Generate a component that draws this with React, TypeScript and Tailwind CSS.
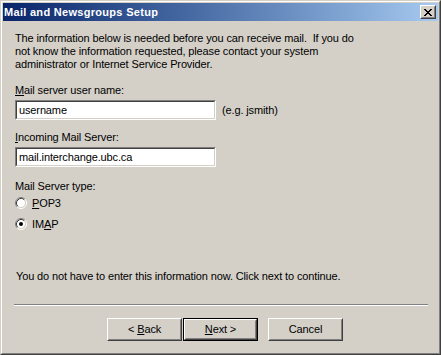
import React from 'react';

const font = { fontFamily: '"Liberation Sans", Arial, sans-serif' };

function Sunken({ value }: { value: string }) {
  return (
    <div className="w-[201px] h-[20px] border border-t-[#808080] border-l-[#808080] border-b-white border-r-white">
      <div className="h-full border border-t-[#404040] border-l-[#404040] border-b-[#d4d0c8] border-r-[#d4d0c8] bg-white pl-[2px] leading-[16px]">
        {value}
      </div>
    </div>
  );
}

function Radio({ checked }: { checked?: boolean }) {
  return (
    <svg width="12" height="12" viewBox="0 0 12 12" className="shrink-0">
      <circle cx="6" cy="6" r="4.5" fill="#fff" />
      <path d="M2.11 9.89 A5.5 5.5 0 0 1 9.89 2.11" stroke="#808080" fill="none" />
      <path d="M9.89 2.11 A5.5 5.5 0 0 1 2.11 9.89" stroke="#fff" fill="none" />
      <path d="M2.82 9.18 A4.5 4.5 0 0 1 9.18 2.82" stroke="#404040" fill="none" />
      <path d="M9.18 2.82 A4.5 4.5 0 0 1 2.82 9.18" stroke="#d4d0c8" fill="none" />
      {checked && <circle cx="6" cy="6" r="2" fill="#000" />}
    </svg>
  );
}

function Button({ children, def }: { children: React.ReactNode; def?: boolean }) {
  const inner = (
    <div className="h-full border border-t-white border-l-white border-b-[#404040] border-r-[#404040]">
      <div className="h-full border border-t-[#d4d0c8] border-l-[#d4d0c8] border-b-[#808080] border-r-[#808080] flex items-center justify-center">
        {children}
      </div>
    </div>
  );
  return def ? (
    <div className="w-[75px] h-[23px] border border-black">{inner}</div>
  ) : (
    <div className="w-[75px] h-[23px]">{inner}</div>
  );
}

export default function App() {
  return (
    <div
      className="w-[441px] h-[355px] bg-[#d4d0c8] text-black text-[11px] leading-[13px] tracking-[-0.13px] border border-t-[#d4d0c8] border-l-[#d4d0c8] border-b-[#404040] border-r-[#404040]"
      style={font}
    >
      <div className="h-full border border-t-white border-l-white border-b-[#808080] border-r-[#808080] p-px flex flex-col">
        {/* title bar */}
        <div className="h-[18px] shrink-0 flex items-center justify-between bg-gradient-to-r from-[#0a246a] to-[#a6caf0] pl-[1px] pr-[2px]">
          <span className="text-white font-bold text-[11px] leading-[18px] tracking-[0.3px]">Mail and Newsgroups Setup</span>
          <div className="w-[16px] h-[14px] bg-[#d4d0c8] border border-t-white border-l-white border-b-[#404040] border-r-[#404040]">
            <div className="h-full border border-t-[#d4d0c8] border-l-[#d4d0c8] border-b-[#808080] border-r-[#808080] flex items-center justify-center">
              <svg width="8" height="7" viewBox="0 0 8 7" shapeRendering="crispEdges">
                <path d="M0 0h2v1h-2zM6 0h2v1h-2zM1 1h2v1h-2zM5 1h2v1h-2zM2 2h4v1h-4zM3 3h2v1h-2zM2 4h4v1h-4zM1 5h2v1h-2zM5 5h2v1h-2zM0 6h2v1h-2zM6 6h2v1h-2z" fill="#000" />
              </svg>
            </div>
          </div>
        </div>

        {/* body */}
        <div className="flex-1 flex flex-col pl-[12px]">
          <p className="mt-[11px] whitespace-nowrap">
            The information below is needed before you can receive mail.&nbsp; If you do
            <br />
            not know the information requested, please contact your system
            <br />
            administrator or Internet Service Provider.
          </p>

          <div className="mt-[13px]">
            <span className="underline">M</span>ail server user name:
          </div>
          <div className="mt-[3px] flex items-center gap-[6px]">
            <Sunken value="username" />
            <span>(e.g. jsmith)</span>
          </div>

          <div className="mt-[11px]">
            <span className="underline">I</span>ncoming Mail Server:
          </div>
          <div className="mt-[3px]">
            <Sunken value="mail.interchange.ubc.ca" />
          </div>

          <div className="mt-[13px]">Mail Server type:</div>
          <div className="mt-[2px] h-[16px] flex items-center gap-[5px]">
            <Radio />
            <span>
              <span className="underline">P</span>OP3
            </span>
          </div>
          <div className="mt-[5px] h-[16px] flex items-center gap-[5px]">
            <Radio checked />
            <span>
              IM<span className="underline">A</span>P
            </span>
          </div>

          <div className="mt-[38px] pl-px">
            You do not have to enter this information now. Click next to continue.
          </div>

          <div className="mt-[21px] -ml-px w-[414px] border-t border-t-[#808080] border-b border-b-white" />

          <div className="mt-[12px] pl-[92px] flex">
            <Button>
              &lt; <span className="underline ml-[3px]">B</span>ack
            </Button>
            <div className="ml-px">
              <Button def>
                <span className="underline">N</span>ext &gt;
              </Button>
            </div>
            <div className="ml-[10px]">
              <Button>Cancel</Button>
            </div>
          </div>
        </div>
      </div>
    </div>
  );
}
